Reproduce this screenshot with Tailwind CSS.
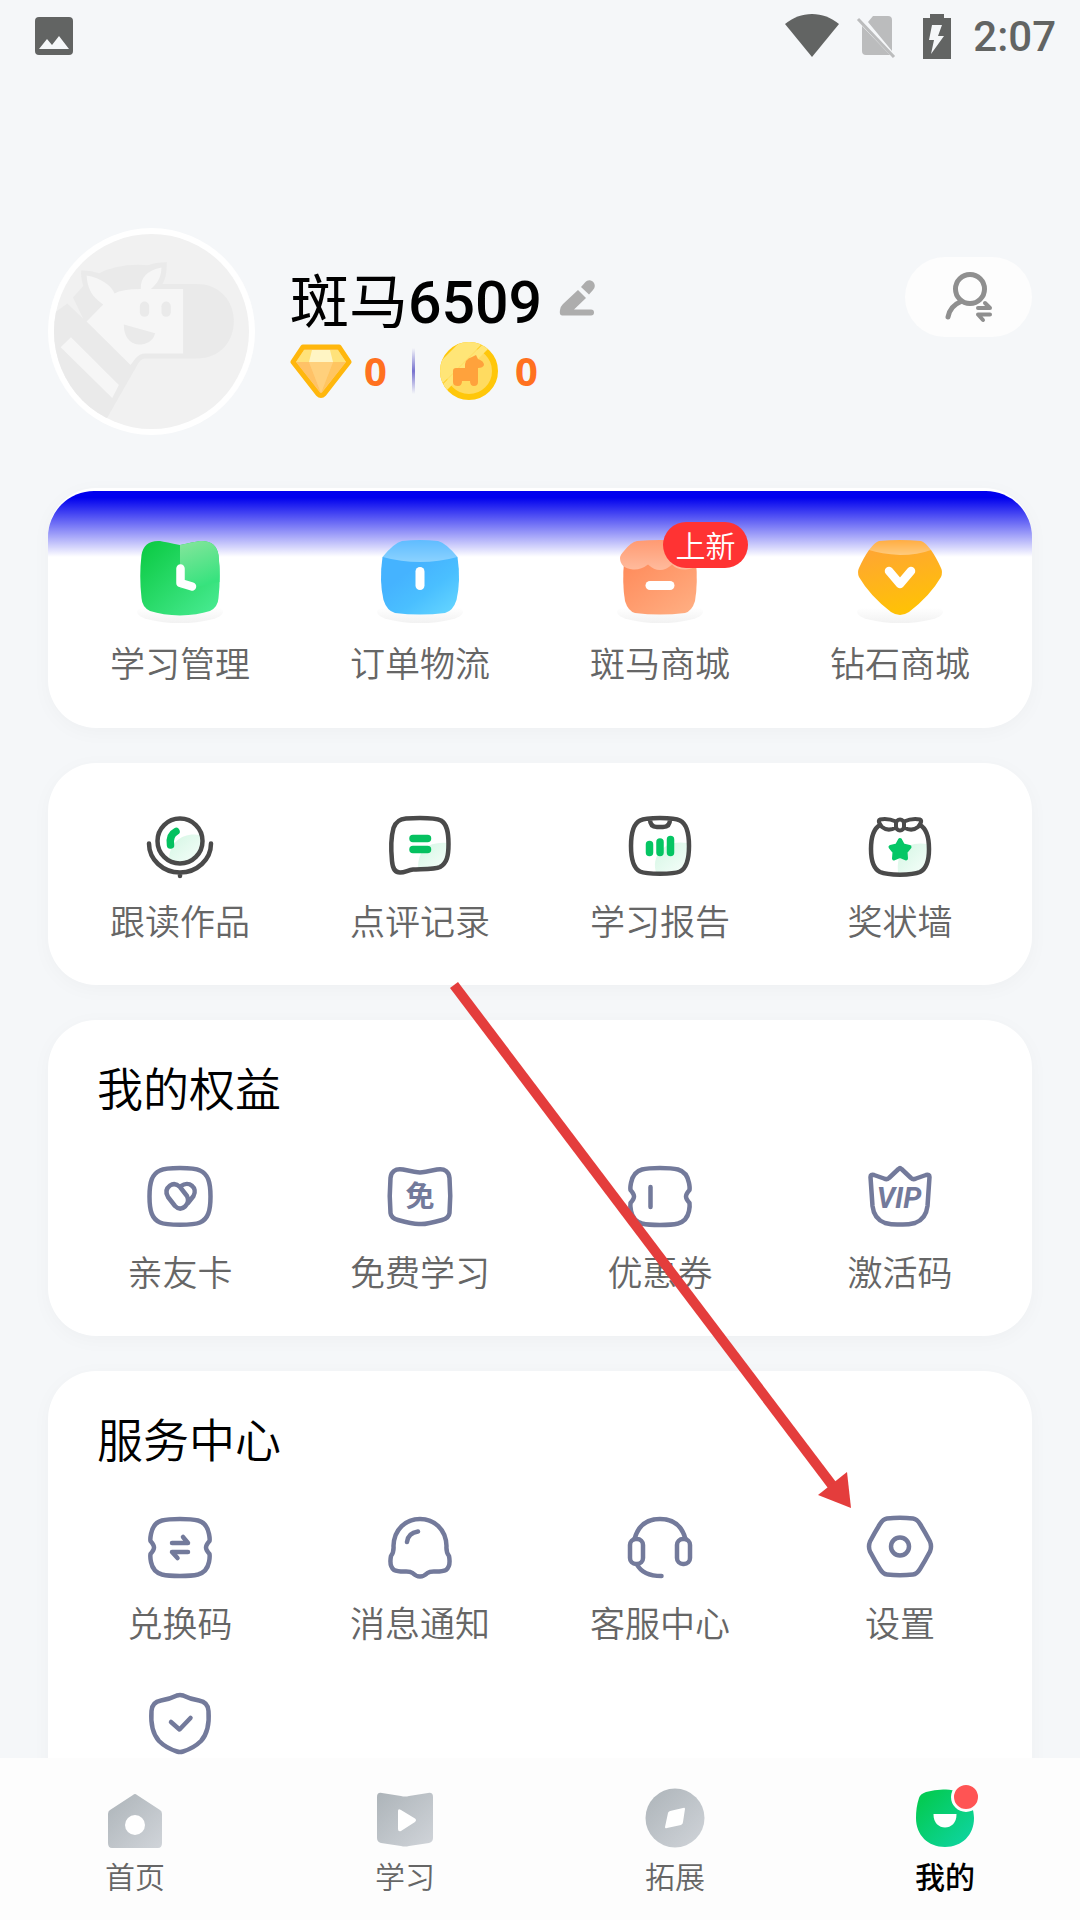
<!DOCTYPE html>
<html lang="zh-CN">
<head>
    <meta charset="UTF-8">
    <meta name="viewport" content="width=device-width, initial-scale=1.0">
    <title>我的</title>
    <script src="https://cdn.jsdelivr.net/npm/@tailwindcss/browser@4"></script>
</head>
<body class="relative flex h-screen flex-col overflow-hidden bg-[#f5f7f9] font-['Noto_Sans_CJK_SC',sans-serif] font-[350] text-black">

    <!-- Status bar -->
    <div class="flex h-[76px] shrink-0 items-start justify-between pt-[12px] pr-[24px] pl-[35px] text-[#626463]">
        <svg class="mt-[5px] h-[38px] w-[38px]" viewBox="0 0 38 38"><rect width="38" height="38" rx="4" fill="currentColor"/><path d="M4 32l8-10 5 6 7-9 10 13z" fill="#f5f7f9"/></svg>
        <div class="flex items-start">
            <svg class="mt-[2px] h-[43px] w-[54px]" viewBox="0 0 54 43"><path d="M27 43L0 10C8 3.500 17 0 27 0s19 3.500 27 10z" fill="currentColor"/></svg>
            <svg class="mt-[4px] ml-[17px] h-[42px] w-[40px]" viewBox="0 0 40 42"><path d="M17 0h15q4 0 4 4v31L12 6zM6 10l28 29H10q-4 0-4-4z" fill="#bbbcbd"/><path d="M2 3l36 38" stroke="#bbbcbd" stroke-width="3"/></svg>
            <svg class="mt-[2px] ml-[27px] h-[45px] w-[28px]" viewBox="0 0 28 45"><path d="M7 0h14v4h7v41H0V4h7z" fill="currentColor"/><path d="M9 11h10l-4 11h6L8 40l3-14H6z" fill="#f5f7f9"/></svg>
            <span class="ml-[22px] font-[Roboto] text-[42px] leading-[50px] font-medium">2:07</span>
        </div>
    </div>

    <main class="min-h-0 flex-1 overflow-hidden px-[48px]">
        <!-- Profile -->
        <header class="mt-[152px] flex items-start">
            <svg class="size-[207px] shrink-0" viewBox="54 54 622 622">
                <defs><clipPath id="face"><circle cx="365" cy="365" r="293"/></clipPath></defs>
                <circle cx="365" cy="365" r="311" fill="#fff"/>
                <circle cx="365" cy="365" r="293" fill="#f1f1f1"/>
                <g clip-path="url(#face)">
                    <path d="M50 325L112 281L160 327L129 263L160 228C155 210 152 196 154 182Q182 181 208 190Q270 158 355 166Q375 157 411 157Q412 200 398 222H500C650 222 650 446 500 446H347Q334 446 325 461L232 624L150 700H30z" fill="#eaeaea"/>
                    <path d="M170 197C210 203 245 227 254 251Q275 237 333 237Q330 187 395 173C394 205 382 222 363 237H460V431H347Q329 431 316 447L302 466L170 335L220 284C186 262 172 235 170 197zM123 382L267 526L247 565L92 412z" fill="#f6f6f6"/>
                    <rect x="330" y="275" width="28" height="46" rx="14" fill="#eaeaea"/>
                    <rect x="395" y="275" width="28" height="46" rx="14" fill="#eaeaea"/>
                    <path d="M282 344L376 370C370 394 350 404 326 404C299 403 281 378 282 344z" fill="#eaeaea"/>
                </g>
            </svg>
            <div class="ml-[35px] pt-[34px]">
                <div class="flex items-center">
                    <h1 class="font-[Roboto,'Noto_Sans_CJK_SC',sans-serif] text-[59px] leading-[72px] font-medium"><span class="font-['Noto_Sans_CJK_SC'] font-normal">斑马</span>6509</h1>
                    <button type="button" aria-label="编辑昵称" class="ml-[17px] pb-[6px]">
                        <svg class="h-[36px] w-[36px]" viewBox="0 0 36 36" fill="#adadad"><path d="M19 10l8 8-12 11.500H32a3 3 0 0 1 0 6H3Q0 35 1 30Q1 27 4 24z"/><path d="M22 7l4-4.500C29-1 33 0 35 3q2 4-1 7l-4 4.500z"/></svg>
                    </button>
                </div>
                <div class="mt-[3px] flex h-[58px] items-center font-['Noto_Sans'] text-[40px] leading-[58px] font-bold text-[#ff7120]">
                    <svg class="h-[54px] w-[62px]" viewBox="0 0 62 54">
                        <path d="M13 3H49L59 18L34 50Q31 53 28 50L3 18z" fill="#ffc976" stroke="#ffb70d" stroke-width="5" stroke-linejoin="round"/>
                        <path d="M14 6h34l8 12H6z" fill="#ffe27a"/><path d="M22 6h18l3 12H19z" fill="#fff5c4"/>
                        <path d="M6 18h13l12 31z" fill="#ffc267"/><path d="M56 18H43L31 49z" fill="#ffc561"/><path d="M19 18h24L31 49z" fill="#ffd07c"/>
                    </svg>
                    <span class="ml-[12px]">0</span>
                    <span class="ml-[25px] h-[46px] w-[3px] bg-linear-to-b from-transparent via-[#7772cf] to-transparent"></span>
                    <svg class="ml-[25px] size-[58px]" viewBox="0 0 58 58">
                        <defs><clipPath id="coin"><circle cx="29" cy="29" r="29"/></clipPath></defs>
                        <circle cx="29" cy="29" r="26" fill="#ffdb60" stroke="#ffc70a" stroke-width="6"/>
                        <g clip-path="url(#coin)" stroke="#ffe577"><path d="M-4 36L36-4" stroke-width="17"/><path d="M2 48L50 0" stroke-width="7"/></g>
                        <path d="M13 29q0-3 3-3h9q-1-9 7-11l4-2 2 4q6 2 6 6q-1 3-6 3v14q0 4-4 4q-4 0-4-5h-8q0 5-4 5q-5 0-5-4z" fill="#ffa23c"/>
                    </svg>
                    <span class="ml-[17px]">0</span>
                </div>
            </div>
            <button type="button" aria-label="切换账号" class="mt-[29px] ml-auto flex h-[80px] w-[127px] items-center justify-center rounded-full bg-[#fdfdfd]">
                <svg class="h-[56px] w-[50px]" viewBox="0 0 50 56" fill="none" stroke="#8f8f8f" stroke-width="5" stroke-linecap="round" stroke-linejoin="round"><circle cx="26" cy="20" r="14.500"/><path d="M17 32.500Q6 37 4 48"/><path d="M34 39H46L41 34M46 45.500H34L39 51" stroke-width="4"/></svg>
            </button>
        </header>

        <div class="mt-[53px] flex flex-col gap-[35px] text-[35px] leading-[48px] text-[#666]">

            <section class="relative rounded-[48px] bg-white px-[12px] pt-[48px] pb-[42px] shadow-[0_4px_20px_rgba(0,0,0,0.03)]">
                <div class="absolute inset-x-0 top-[3px] h-[66px] rounded-t-[46px] bg-linear-to-b from-[#00e] from-10% to-[#00f]/0"></div>
                <div class="relative grid grid-cols-4">
                    <a href="#" class="flex flex-col items-center gap-[14px]">
                        <svg class="size-[88px]" viewBox="0 0 88 88">
                            <defs>
                                <linearGradient id="green" x1="0" y1="0" x2="1" y2="1"><stop stop-color="#09c940"/><stop offset="1" stop-color="#4bec95"/></linearGradient>
                                <linearGradient id="page" x1="0" y1="0" x2=".3" y2="1"><stop stop-color="#86e59c"/><stop offset="1" stop-color="#37e37e"/></linearGradient>
                                <linearGradient id="floor" x1="0" y1="0" x2="0" y2="1"><stop offset=".3" stop-color="#fff"/><stop offset="1" stop-color="#f2f2f2"/></linearGradient>
                            </defs>
                            <ellipse cx="44" cy="76" rx="43" ry="11" fill="url(#floor)"/>
                            <path d="M44 9Q30 6 24 5Q8 4 5.500 19Q3 40 5.500 62Q6 71 14 75Q27 79 44 79.500Q61 79 74 75Q82 71 82.500 62Q85 40 82.500 19Q80 4 64 5Q57 6 44 9z" fill="url(#green)"/>
                            <path d="M44 9Q57 6 64 5Q80 4 82.500 19Q84 33 83.500 46Q64 51 44 53z" fill="url(#page)"/>
                            <path d="M44.500 32.500V47L56 50.500" fill="none" stroke="#fff" stroke-width="8.500" stroke-linecap="round" stroke-linejoin="round"/>
                        </svg>
                        <span>学习管理</span>
                    </a>
                    <a href="#" class="flex flex-col items-center gap-[14px]">
                        <svg class="size-[88px]" viewBox="0 0 88 88">
                            <defs>
                                <linearGradient id="blue" x1="0" y1="0" x2="1" y2="1"><stop offset=".3" stop-color="#45b3ff"/><stop offset=".6" stop-color="#4abfff"/><stop offset="1" stop-color="#68d8ff"/></linearGradient>
                                <linearGradient id="lid" x1="0" y1="0" x2="0" y2="1"><stop stop-color="#5fbcff"/><stop offset="1" stop-color="#8bd2ff"/></linearGradient>
                            </defs>
                            <ellipse cx="44" cy="76" rx="43" ry="11" fill="url(#floor)"/>
                            <path d="M6.500 21H81.500Q85 45 80.500 64Q77 75 69 77Q44 80 19 77Q11 75 7.500 64Q3 45 6.500 21z" fill="url(#blue)"/>
                            <path d="M6.500 21Q18 7 26 5Q44 3 62 5Q70 7 81.500 21Q44 31 6.500 21z" fill="url(#lid)"/>
                            <path d="M44 35.500v14" stroke="#fff" stroke-width="9" stroke-linecap="round"/>
                        </svg>
                        <span>订单物流</span>
                    </a>
                    <a href="#" class="flex flex-col items-center gap-[14px]">
                        <span class="relative">
                            <svg class="size-[88px]" viewBox="0 0 88 88">
                                <defs>
                                    <linearGradient id="shop" x1="0" y1="0" x2="1" y2="1"><stop stop-color="#ff8a5a"/><stop offset="1" stop-color="#ffb084"/></linearGradient>
                                    <linearGradient id="awning" x1="0" y1="0" x2="0" y2="1"><stop stop-color="#ff9a72"/><stop offset="1" stop-color="#ffbb9d"/></linearGradient>
                                </defs>
                                <ellipse cx="44" cy="76" rx="43" ry="11" fill="url(#floor)"/>
                                <path d="M8 26H80Q82 47 79 65Q76 75 69 77Q44 80 19 77Q12 75 9 65Q6 47 8 26z" fill="url(#shop)"/>
                                <path d="M4 22Q4 19 8 15Q15 6 21 5Q44 3 67 5Q73 6 80 15Q84 19 84 22Q84 32 70 33.500Q61 34 56 28.500Q50 34 44 34Q38 34 32 28.500Q25 34 17 33.500Q4 32 4 22z" fill="url(#awning)"/>
                                <path d="M34 49.500H54" stroke="#fff" stroke-width="9" stroke-linecap="round"/>
                            </svg>
                            <span class="absolute -top-[14px] left-[47px] flex h-[46px] w-[85px] items-center justify-center rounded-full bg-[#f33] pb-[2px] text-[30px] text-white">上新</span>
                        </span>
                        <span>斑马商城</span>
                    </a>
                    <a href="#" class="flex flex-col items-center gap-[14px]">
                        <svg class="size-[88px]" viewBox="0 0 88 88">
                            <defs>
                                <linearGradient id="gold" x1="0" y1="0" x2=".3" y2="1"><stop stop-color="#ffa534"/><stop offset="1" stop-color="#ffc107"/></linearGradient>
                                <linearGradient id="cap" x1="0" y1="0" x2="0" y2="1"><stop stop-color="#ffad42"/><stop offset="1" stop-color="#ffcb7e"/></linearGradient>
                            </defs>
                            <ellipse cx="44" cy="76" rx="43" ry="11" fill="url(#floor)"/>
                            <path d="M13 14H75Q80 21 85 32Q87 36 85 41Q74 60 53 76Q44 82 35 76Q14 60 3 41Q1 36 3 32Q8 21 13 14z" fill="url(#gold)"/>
                            <path d="M13 14Q19 6 23 5Q44 3 65 5Q69 6 75 14Q62 19 44 19Q25 18 13 14z" fill="url(#cap)"/>
                            <path d="M33 35L44 48L55 35" fill="none" stroke="#fff" stroke-width="8.500" stroke-linecap="round" stroke-linejoin="round"/>
                        </svg>
                        <span>钻石商城</span>
                    </a>
                </div>
            </section>

            <section class="grid grid-cols-4 rounded-[48px] bg-white px-[12px] pt-[44px] pb-[41px] shadow-[0_4px_20px_rgba(0,0,0,0.03)]">
                <a href="#" class="flex flex-col items-center gap-[9px]">
                    <svg class="size-[80px]" viewBox="0 0 80 80" fill="none" stroke="#4a4a4a" stroke-width="4.500" stroke-linecap="round" stroke-linejoin="round">
                        <defs><linearGradient id="mint" x1="0" y1="0" x2="1" y2="1"><stop stop-color="#d3f6e3"/><stop offset="1" stop-color="#f6fefa"/></linearGradient></defs>
                        <path d="M29 51C30 35 43 25 60 28C63 39 60 49 48 54Q38 57 29 51z" fill="url(#mint)" stroke="none"/>
                        <circle cx="40" cy="34" r="22.500"/><path d="M9 36.500A31 29 0 0 0 71 36.500M40 66v3"/>
                        <path d="M36 24.500Q29 28 30.500 38" stroke="#05c160" stroke-width="7.500"/>
                    </svg>
                    <span>跟读作品</span>
                </a>
                <a href="#" class="flex flex-col items-center gap-[9px]">
                    <svg class="size-[80px]" viewBox="0 0 80 80" fill="none" stroke="#4a4a4a" stroke-width="4.500" stroke-linecap="round" stroke-linejoin="round">
                        <path d="M38 61Q38 34 67 36Q68 60 57 61z" fill="url(#mint)" stroke="none"/>
                        <path d="M40 11C50 11 57 11.500 61 13.500C67 17 68.500 25 68.500 37C68.500 49 67 56 60 60C55 62.500 42 62 33 62.500C28 63 25 65.500 20 65.500C14 65.500 12.500 60 12 54C11 44 11 30 13.500 21C16 14 20 12 26 11.500Q33 11 40 11z"/>
                        <path d="M33 31.500H47.500M33 42.500H47.500" stroke="#05c160" stroke-width="7.500"/>
                    </svg>
                    <span>点评记录</span>
                </a>
                <a href="#" class="flex flex-col items-center gap-[9px]">
                    <svg class="size-[80px]" viewBox="0 0 80 80" fill="none" stroke="#4a4a4a" stroke-width="4.500" stroke-linecap="round" stroke-linejoin="round">
                        <path d="M36 65C31 50 43 32 67 36Q69 56 58 64z" fill="url(#mint)" stroke="none"/>
                        <path d="M40 11C50 11 56 11.500 60 13.500C67 17 69 26 69 39C69 52 67 61 60 64.500C53 67.500 27 67.500 20 64.500C13 61 11 52 11 39C11 26 13 17 20 13.500C24 11.500 30 11 40 11zM30 12Q30 20 37 20H43Q50 20 50 12"/>
                        <path d="M29.500 37.500V45.500M40 35V45.500M50.500 32.500V45.500" stroke="#05c563" stroke-width="7.500"/>
                    </svg>
                    <span>学习报告</span>
                </a>
                <a href="#" class="flex flex-col items-center gap-[9px]">
                    <svg class="size-[80px]" viewBox="0 0 80 80" fill="none" stroke="#4a4a4a" stroke-width="4.500" stroke-linecap="round" stroke-linejoin="round">
                        <path d="M38 66Q35 33 67 37Q68 60 58 65z" fill="url(#mint)" stroke="none"/>
                        <path d="M20 18C13 22 11 30 11 42C11 54 14 62 20 65C28 68.500 52 68.500 60 65C66 62 69 54 69 42C69 30 67 22 60 18"/>
                        <path d="M36 14.500Q28 11 20 12.500Q17 14 22 20Q28 25 36 20.500zM44 14.500Q52 11 60 12.500Q63 14 58 20Q52 25 44 20.500z" stroke-width="4"/>
                        <rect x="36" y="12.500" width="8" height="11" rx="4" fill="#fff" stroke-width="4"/>
                        <path d="M40 33l3 5.500 6.500 1.500-4 5 .5 6.500-6-2.500-6 2.500 .5-6.500-4-5 6.500-1.500z" fill="#05c766" stroke="#05c766" stroke-width="4"/>
                    </svg>
                    <span>奖状墙</span>
                </a>
            </section>

            <section class="rounded-[48px] bg-white px-[12px] pt-[34px] pb-[41px] shadow-[0_4px_20px_rgba(0,0,0,0.03)]">
                <h2 class="px-[37px] text-[46px] leading-[64px] text-black">我的权益</h2>
                <div class="mt-[40px] grid grid-cols-4">
                    <a href="#" class="flex flex-col items-center gap-[9px]">
                        <svg class="size-[80px]" viewBox="0 0 80 80" fill="none" stroke="#737a9b" stroke-width="4.500" stroke-linecap="round" stroke-linejoin="round">
                            <path d="M40 10C50 10 56 10.500 60 12.500C68 16 70.500 24 70.500 38.500C70.500 53 68 61 60 64.500C53 67.500 27 67.500 20 64.500C12 61 9.500 53 9.500 38.500C9.500 24 12 16 20 12.500C24 10.500 30 10 40 10z"/>
                            <path d="M40 29Q35 24 30 27.500Q24 32 28 39L35 48Q40 53 45 48.500Q50 44 47 38zM41 28C49 22 58 30 53.500 38L48 45"/>
                        </svg>
                        <span>亲友卡</span>
                    </a>
                    <a href="#" class="flex flex-col items-center gap-[9px]">
                        <svg class="size-[80px]" viewBox="0 0 80 80" fill="none" stroke="#737a9b" stroke-width="4.500" stroke-linecap="round" stroke-linejoin="round">
                            <path d="M40 14.500Q43 14.500 57 11.500C65 10 69 14 69.500 20Q71 38 69.500 55Q69 60 62 62Q46 66.500 40 66Q34 66.500 18 62Q11 60 10.500 55Q9 38 10.500 20C11 14 15 10 23 11.500Q37 14.500 40 14.500z"/>
                            <text x="40" y="49" text-anchor="middle" font-size="29" font-weight="700" fill="#737a9b" stroke="none">免</text>
                        </svg>
                        <span>免费学习</span>
                    </a>
                    <a href="#" class="flex flex-col items-center gap-[9px]">
                        <svg class="size-[80px]" viewBox="0 0 80 80" fill="none" stroke="#737a9b" stroke-width="4.500" stroke-linecap="round" stroke-linejoin="round">
                            <path d="M40 10Q52 10 58 11.500Q67 14 69 25Q70 30 69.500 32Q66 36 66 38.500Q66 41 69.500 45Q70 48 69 53Q67 63 58 65.500Q52 67 40 67Q28 67 22 65.500Q13 63 11 53Q10 48 10.500 45Q14 41 14 38.500Q14 36 10.500 32Q10 30 11 25Q13 14 22 11.500Q28 10 40 10zM30.500 29V49"/>
                        </svg>
                        <span>优惠券</span>
                    </a>
                    <a href="#" class="flex flex-col items-center gap-[9px]">
                        <svg class="size-[80px]" viewBox="0 0 80 80" fill="none" stroke="#737a9b" stroke-width="4.500" stroke-linecap="round" stroke-linejoin="round">
                            <path d="M10.500 19Q10.500 16 14 17L24 20.500Q27 22 29 20L38.500 11Q40 9.500 41.500 11L51 20Q53 22 56 20.500L66 17Q69.500 16 69.500 19L67.500 48Q66 61 55 65Q47 67 40 66.500Q33 67 25 65Q14 61 12.500 48z"/>
                            <text x="39" y="50" text-anchor="middle" font-family="Roboto" font-size="29" font-weight="700" font-style="italic" fill="#737a9b" stroke="none">VIP</text>
                        </svg>
                        <span>激活码</span>
                    </a>
                </div>
            </section>

            <section class="rounded-[48px] bg-white px-[12px] pt-[34px] pb-[41px] shadow-[0_4px_20px_rgba(0,0,0,0.03)]">
                <h2 class="px-[37px] text-[46px] leading-[64px] text-black">服务中心</h2>
                <div class="mt-[40px] grid grid-cols-4 gap-y-[39px]">
                    <a href="#" class="flex flex-col items-center gap-[9px]">
                        <svg class="size-[80px]" viewBox="0 0 80 80" fill="none" stroke="#737a9b" stroke-width="4.500" stroke-linecap="round" stroke-linejoin="round">
                            <path d="M40 10Q52 10 58 11.500Q67 14 69 25Q70 30 69.500 32Q66 36 66 38.500Q66 41 69.500 45Q70 48 69 53Q67 63 58 65.500Q52 67 40 67Q28 67 22 65.500Q13 63 11 53Q10 48 10.500 45Q14 41 14 38.500Q14 36 10.500 32Q10 30 11 25Q13 14 22 11.500Q28 10 40 10z"/>
                            <path d="M32 34H48L43 28M48 43H32L37.500 49"/>
                        </svg>
                        <span>兑换码</span>
                    </a>
                    <a href="#" class="flex flex-col items-center gap-[9px]">
                        <svg class="size-[80px]" viewBox="0 0 80 80" fill="none" stroke="#737a9b" stroke-width="4.500" stroke-linecap="round" stroke-linejoin="round">
                            <path d="M40 10C54 10 66 20 66.500 37Q66 43 69 47Q71 57 66 61Q63 62.500 56 62.500Q50 62 47.500 64Q44 67.500 40 67.500Q36 67.500 32.500 64Q30 62 24 62.500Q17 62.500 14 61Q9 57 11 47Q14 43 13.500 37C14 20 26 10 40 10zM38 22.500Q28 24 27 33"/>
                        </svg>
                        <span>消息通知</span>
                    </a>
                    <a href="#" class="flex flex-col items-center gap-[9px]">
                        <svg class="size-[80px]" viewBox="0 0 80 80" fill="none" stroke="#737a9b" stroke-width="4.500" stroke-linecap="round" stroke-linejoin="round">
                            <rect x="10" y="30" width="13" height="25" rx="6"/><rect x="57" y="30" width="13" height="25" rx="6"/>
                            <path d="M14.500 30C18 17 27 10 40 10S62 17 65.500 30M17 55.500Q23 67 41.500 67"/>
                        </svg>
                        <span>客服中心</span>
                    </a>
                    <a href="#" class="flex flex-col items-center gap-[9px]">
                        <svg class="size-[80px]" viewBox="0 0 80 80" fill="none" stroke="#737a9b" stroke-width="4.500" stroke-linecap="round" stroke-linejoin="round">
                            <path d="M27 9.500Q40 8 53 9.500Q57 10 60 15Q65 23 70 32.500Q72 37.500 70 42.500Q65 52 60 60Q57 65 53 65.500Q40 67 27 65.500Q23 65 20 60Q15 52 10 42.500Q8 37.500 10 32.500Q15 23 20 15Q23 10 27 9.500z"/><circle cx="40" cy="37.500" r="9"/>
                        </svg>
                        <span>设置</span>
                    </a>
                    <a href="#" aria-label="隐私中心" class="flex flex-col items-center">
                        <svg class="size-[80px]" viewBox="0 0 80 80" fill="none" stroke="#737a9b" stroke-width="4.500" stroke-linecap="round" stroke-linejoin="round">
                            <path d="M37 10.500Q40 9.500 43 10.500Q50 14 59 15.500Q68 17 68.500 26Q70 46 61 56Q54 63 43 66.500Q40 67.500 37 66.500Q26 63 19 56Q10 46 11.500 26Q12 17 21 15.500Q30 14 37 10.500zM31 37L39.500 44.500L50.500 33"/>
                        </svg>
                    </a>
                </div>
            </section>
        </div>
    </main>

    <!-- Tab bar -->
    <nav class="grid h-[162px] shrink-0 grid-cols-4 bg-[#fdfdfd] pt-[26px] text-[30px] leading-[38px] text-[#666]">
        <a href="#" class="flex flex-col items-center">
            <svg class="size-[72px]" viewBox="0 0 72 72">
                <defs><linearGradient id="gray" x1="0" y1="0" x2="1" y2="1"><stop stop-color="#adb4b9"/><stop offset="1" stop-color="#d0d4d9"/></linearGradient></defs>
                <path d="M34 11Q36 9 38 11L61 26Q63 27 63 30V59Q63 64 59 64H13Q9 64 9 59V30Q9 27 11 26z" fill="url(#gray)"/><circle cx="36" cy="41" r="10" fill="#fff"/>
            </svg>
            <span>首页</span>
        </a>
        <a href="#" class="flex flex-col items-center">
            <svg class="size-[72px]" viewBox="0 0 72 72">
                <path d="M8 13Q8 8 13 9L32 12Q36 13 40 12L59 9Q64 8 64 13V54Q64 58 60 59L40 62Q36 63 32 62L12 59Q8 58 8 54z" fill="url(#gray)"/><path d="M29 27Q29 24 32 26L46 34.500Q48 36 46 38L32 47Q29 48 29 45z" fill="#fff"/>
            </svg>
            <span>学习</span>
        </a>
        <a href="#" class="flex flex-col items-center">
            <svg class="size-[72px]" viewBox="0 0 72 72">
                <circle cx="36" cy="34" r="29.500" fill="url(#gray)"/><path d="M29 29Q29 28 31 27L44 24Q46 23 46 25L44 38Q44 40 42 41L28 44Q26 45 26 43z" fill="#fff"/>
            </svg>
            <span>拓展</span>
        </a>
        <a href="#" aria-current="page" class="flex flex-col items-center font-medium text-black">
            <svg class="size-[72px]" viewBox="0 0 72 72">
                <defs><linearGradient id="active" x1="0" y1="0" x2="1" y2="1"><stop offset=".15" stop-color="#04cb55"/><stop offset="1" stop-color="#0fd5a8"/></linearGradient></defs>
                <path d="M10 14Q11 10 17 8Q27 5 37 5.500C55 6 65 18 65 34C65 51 53 63 36 63C19 63 7 51 7 34Q7 23 10 14z" fill="url(#active)"/>
                <path d="M24.500 30H47.500C48 48 24 48 24.500 30z" fill="#fff"/>
                <circle cx="57" cy="13" r="13.500" fill="#ff5454" stroke="#fdfdfd" stroke-width="3"/>
            </svg>
            <span>我的</span>
        </a>
    </nav>

    <!-- Pointer to the settings entry -->
    <svg class="pointer-events-none absolute top-[980px] left-[445px] h-[530px] w-[410px]" viewBox="0 0 410 530">
        <path d="M9 5L390 509" stroke="#e43d3c" stroke-width="10"/><path d="M406 528L402 492L373 515z" fill="#e43d3c"/>
    </svg>
</body>
</html>
